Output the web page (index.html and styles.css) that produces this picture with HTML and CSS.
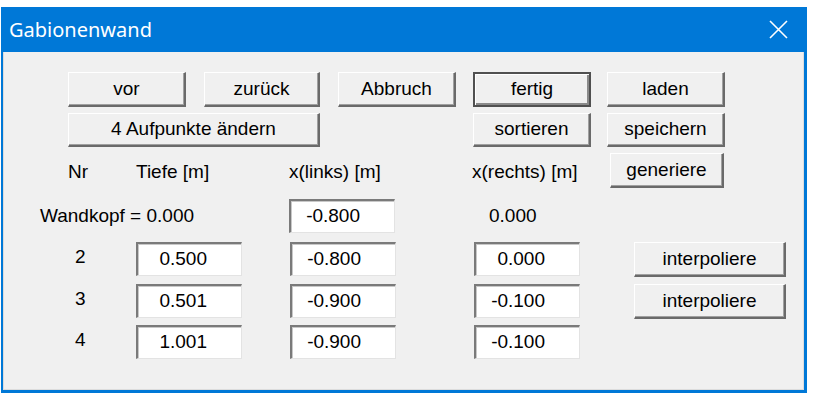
FILE: index.html
```html
<!DOCTYPE html>
<html lang="de">
<head>
<meta charset="utf-8">
<title>Gabionenwand</title>
<link rel="stylesheet" href="styles.css">
</head>
<body>
<div class="window">
  <div class="titlebar">
    <span class="title">Gabionenwand</span>
    <svg class="close" width="19" height="19" viewBox="0 0 19 19"><path d="M1 1 L18 18 M18 1 L1 18" stroke="#fff" stroke-width="1.6" fill="none"/></svg>
  </div>
  <div class="client">
    <div class="row r1">
      <div class="btn w118">vor</div>
      <div class="btn w116 g18">zurück</div>
      <div class="btn w118 g18">Abbruch</div>
      <div class="btn btn-default w118 g17">fertig</div>
      <div class="btn w118 g16">laden</div>
    </div>
    <div class="row r2">
      <div class="btn w252">4 Aufpunkte ändern</div>
      <div class="btn w118 g153">sortieren</div>
      <div class="btn w118 g16">speichern</div>
    </div>
    <div class="row r3">
      <span class="lbl l-nr">Nr</span>
      <span class="lbl l-tiefe">Tiefe [m]</span>
      <span class="lbl l-links">x(links) [m]</span>
      <span class="lbl l-rechts">x(rechts) [m]</span>
      <div class="btn btn-gen">generiere</div>
    </div>
    <div class="row r4">
      <span class="lbl l-kopf">Wandkopf = 0.000</span>
      <div class="field f-links-kopf">-0.800</div>
      <span class="lbl l-null">0.000</span>
    </div>
    <div class="row r5">
      <span class="nr">2</span>
      <div class="field">0.500</div>
      <div class="field g48">-0.800</div>
      <div class="field g78">0.000</div>
      <div class="btn btn-int">interpoliere</div>
    </div>
    <div class="row r6">
      <span class="nr">3</span>
      <div class="field">0.501</div>
      <div class="field g48">-0.900</div>
      <div class="field g78">-0.100</div>
      <div class="btn btn-int">interpoliere</div>
    </div>
    <div class="row r7">
      <span class="nr">4</span>
      <div class="field">1.001</div>
      <div class="field g48">-0.900</div>
      <div class="field g78">-0.100</div>
    </div>
  </div>
</div>
</body>
</html>
```
FILE: styles.css
```css
html, body {
  margin: 0;
  padding: 0;
  background: #ffffff;
}

.window {
  margin: 7px 0 0 1px;
  width: 806px;
  height: 386px;
  box-sizing: border-box;
  background: #0078d7;
  padding: 0 3px 3px 2px;
  display: flex;
  flex-direction: column;
}

.titlebar {
  height: 45px;
  flex: none;
  display: flex;
  align-items: center;
  justify-content: space-between;
  padding: 0 16px 0 6px;
}

.title {
  font-family: "Noto Sans", "Open Sans", sans-serif;
  font-size: 20px;
  color: #ffffff;
  margin-top: -1px;
}

.close {
  display: block;
}

.client {
  flex: 1;
  background: #f0f0f0;
  border: 1px solid #dcdcdc;
  border-top: none;
  font-family: "Liberation Sans", Arial, sans-serif;
  font-size: 19px;
  color: #000;
  padding-left: 64px;
}

.row {
  display: flex;
  align-items: center;
}

.r1 { margin-top: 20px; height: 35px; }
.r2 { margin-top: 6px; height: 34px; }
.r3 { margin-top: 5px; height: 36px; }
.r4 { margin-top: 11px; height: 34px; }
.r5 { margin-top: 8px; height: 35px; }
.r6 { margin-top: 7px; height: 35px; }
.r7 { margin-top: 6px; height: 35px; }

.btn {
  box-sizing: border-box;
  height: 100%;
  background: #f0f0f0;
  border-style: solid;
  border-width: 1px 2px 2px 1px;
  border-color: #ffffff #6a6a6a #6a6a6a #ffffff;
  box-shadow: inset -1px -1px 0 #a0a0a0;
  display: flex;
  align-items: center;
  justify-content: center;
  padding-bottom: 1px;
  white-space: nowrap;
}

.btn-default {
  border: 2px solid #505050;
  box-shadow: inset 1px 1px 0 #ffffff, inset -2px -2px 0 #8a8a8a;
}

.w116 { width: 116px; }
.w118 { width: 118px; }
.w252 { width: 252px; }

.g16 { margin-left: 16px; }
.g17 { margin-left: 17px; }
.g18 { margin-left: 18px; }
.g153 { margin-left: 153px; }
.g48 { margin-left: 48px; }
.g78 { margin-left: 78px; }

.lbl {
  white-space: nowrap;
  line-height: 20px;
}

.r3 .lbl { margin-top: 4px; }
.l-nr { width: 68px; }
.l-tiefe { width: 153px; }
.l-links { width: 183px; }
.l-rechts { width: 138px; }

.btn-gen {
  width: 114px;
  height: 35px;
  margin-top: 1px;
}

.l-kopf {
  margin-left: -28px;
  width: 249px;
}

.l-null {
  margin-left: 94px;
}

.f-links-kopf {
  margin-left: 0;
}

.nr {
  width: 68px;
  padding-left: 7px;
  box-sizing: border-box;
  margin-top: -3px;
}

.field {
  box-sizing: border-box;
  width: 106px;
  height: 34px;
  background: #ffffff;
  border-style: solid;
  border-width: 2px 1px 1px 2px;
  border-color: #7a7a7a #e3e3e3 #e3e3e3 #7a7a7a;
  box-shadow: inset 1px 1px 0 #c8c8c8;
  text-align: right;
  padding-right: 34px;
  line-height: 30px;
  white-space: nowrap;
}

.btn-int {
  width: 152px;
  height: 35px;
  margin-left: 54px;
  margin-top: 2px;
}
```
